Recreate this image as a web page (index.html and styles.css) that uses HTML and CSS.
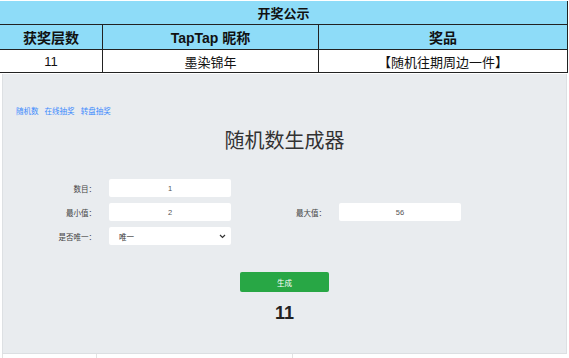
FILE: index.html
```html
<!DOCTYPE html>
<html lang="zh">
<head>
    <meta charset="UTF-8">
    <title>开奖公示</title>
    <link rel="stylesheet" href="styles.css">
</head>
<body>
    <table class="gongshi">
        <tr class="titulo"><td colspan="3">开奖公示</td></tr>
        <tr class="cabecera">
            <td class="col1">获奖层数</td>
            <td class="col2">TapTap 昵称</td>
            <td class="col3">奖品</td>
        </tr>
        <tr class="fila">
            <td>11</td>
            <td>墨染锦年</td>
            <td>【随机往期周边一件】</td>
        </tr>
    </table>

    <div class="panel">
        <div class="enlaces">
            <a href="#">随机数</a>
            <a href="#">在线抽奖</a>
            <a href="#">转盘抽奖</a>
        </div>
        <h1 class="titulo-gen">随机数生成器</h1>

        <div class="form">
            <div class="fila-form">
                <label class="etiqueta">数目：</label>
                <input class="campo" type="text" value="1">
            </div>
            <div class="fila-form">
                <label class="etiqueta">最小值：</label>
                <input class="campo" type="text" value="2">
                <label class="etiqueta etiqueta-2">最大值：</label>
                <input class="campo" type="text" value="56">
            </div>
            <div class="fila-form">
                <label class="etiqueta">是否唯一：</label>
                <div class="campo selector">
                    <span>唯一</span>
                    <svg width="7" height="5" viewBox="0 0 7 5"><path d="M1 1 L3.5 3.5 L6 1" fill="none" stroke="#333" stroke-width="1.2"/></svg>
                </div>
            </div>
        </div>

        <div class="acciones">
            <button class="boton">生成</button>
            <div class="resultado">11</div>
        </div>
    </div>
    <div class="pie">
        <span class="p1"></span><span class="p2"></span><span class="p3"></span>
    </div>
</body>
</html>
```

FILE: styles.css
```css
body {
    margin: 0;
    background: #fff;
    font-family: "Liberation Sans", "Noto Sans CJK SC", sans-serif;
    width: 569px;
    overflow: hidden;
}

.gongshi {
    border-collapse: collapse;
    width: 568px;
    margin-top: 1px;
    font-family: "Liberation Sans", "Noto Sans CJK SC", sans-serif;
    color: #111;
}

.gongshi td {
    border: 1px solid #222;
    text-align: center;
    padding: 0;
}

.titulo td {
    background: #8edcf8;
    height: 23px;
    font-size: 13px;
    font-weight: bold;
    border-top: none;
    border-left: none;
}

.cabecera td {
    background: #8edcf8;
    height: 24px;
    font-size: 14px;
    font-weight: bold;
}

.fila td {
    height: 22px;
    font-size: 13px;
    background: #fff;
}

.col1 { width: 102px; }
.col2 { width: 215px; }

.gongshi td:first-child { border-left: none; }

/* panel gris */
.panel {
    background: #e9ecef;
    margin: 1px 2px 0 2px;
    border-left: 1px solid #dde0e3;
    border-right: 1px solid #dde0e3;
    padding-top: 33px;
    box-sizing: border-box;
    height: 279px;
}

.enlaces {
    padding-left: 13px;
    font-size: 7.5px;
    line-height: 10px;
}

.enlaces a {
    color: #3d8bfd;
    text-decoration: none;
    margin-right: 4px;
}

.titulo-gen {
    margin: 10px 0 0 0;
    text-align: center;
    font-size: 20px;
    font-weight: normal;
    color: #333;
    line-height: 28px;
}

.form {
    margin-top: 24px;
    display: flex;
    flex-direction: column;
    gap: 6px;
}

.fila-form {
    display: flex;
    align-items: center;
    height: 18px;
}

.etiqueta {
    width: 93px;
    text-align: right;
    font-size: 7.5px;
    color: #444;
}

.etiqueta-2 {
    width: 95px;
}

.campo {
    width: 122px;
    height: 18px;
    box-sizing: border-box;
    margin-left: 13px;
    border: none;
    border-radius: 2px;
    background: #fff;
    font-size: 7.5px;
    text-align: center;
    color: #555;
    font-family: inherit;
    padding: 0;
}

.selector {
    display: flex;
    align-items: center;
    justify-content: space-between;
    padding: 0 5px 0 10px;
    text-align: left;
    color: #333;
}

.acciones {
    display: flex;
    flex-direction: column;
    align-items: center;
    margin-top: 27px;
}

.boton {
    width: 89px;
    height: 20px;
    background: #28a745;
    color: #fff;
    border: none;
    border-radius: 2px;
    font-size: 7.5px;
    font-family: inherit;
    padding: 0;
}

.resultado {
    margin-top: 10px;
    font-size: 18px;
    font-weight: bold;
    color: #222;
    line-height: 22px;
}

.pie {
    display: flex;
    border-top: 1px solid #dcdfe2;
    height: 4px;
    margin: 0 2px;
}

.pie span { border-left: 1px solid #e3e3e3; }
.p1 { width: 93px; }
.p2 { width: 195px; }
.p3 { flex: 1; }
```
